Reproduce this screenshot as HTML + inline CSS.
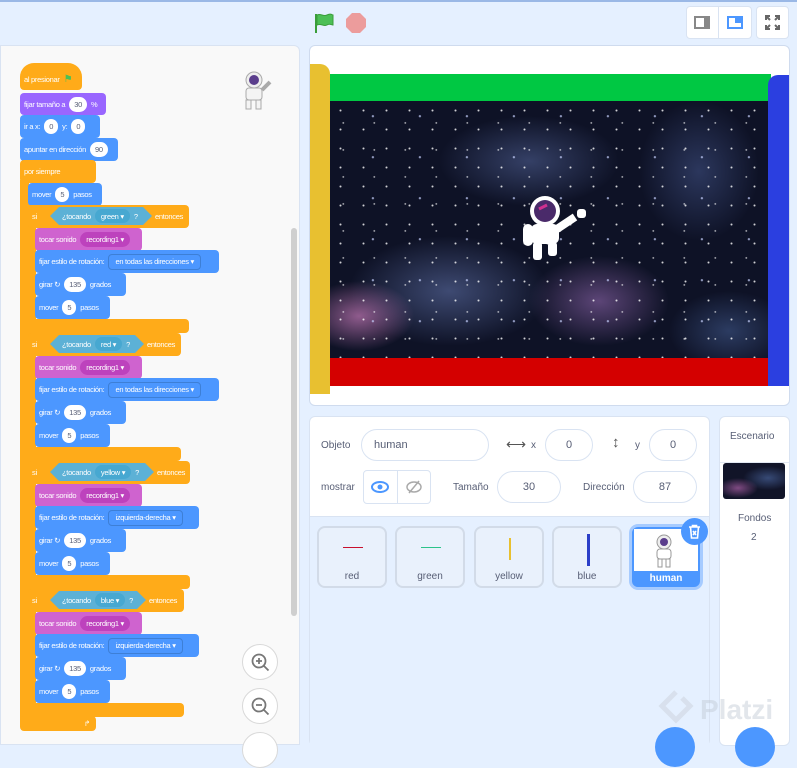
<!DOCTYPE html>
<html><head><meta charset="utf-8"><style>
*{margin:0;padding:0;box-sizing:border-box}
body{width:797px;height:740px;overflow:hidden;background:#e5f0ff;font-family:"Liberation Sans",sans-serif;position:relative}
.a{position:absolute}
.b{position:absolute;height:23px;border-radius:4px;color:#fff;font-size:7.5px;display:flex;align-items:center;padding-left:4px;gap:4px;white-space:nowrap;letter-spacing:-0.3px}
.o{background:#ffab19}.p{background:#9966ff}.bl{background:#4c97ff}.m{background:#cf63cf}
.in{background:#fff;color:#575e75;border-radius:8px;height:15px;padding:0 5px;display:flex;align-items:center}
.dm{background:#bd42bd;border-radius:8px;height:15px;padding:0 6px;display:flex;align-items:center}
.db{background:#4c97ff;border:1px solid #3d7fd6;border-radius:4px;height:16px;padding:0 6px;display:flex;align-items:center}
.hx{position:absolute;height:18px;top:2px;background:#5cb1d6;color:#fff;display:flex;align-items:center;gap:4px;padding:0 12px;clip-path:polygon(9px 0,calc(100% - 9px) 0,100% 50%,calc(100% - 9px) 100%,9px 100%,0 50%)}
.dc{background:#47a8d1;border-radius:8px;height:14px;padding:0 6px;display:flex;align-items:center}
.fld{position:absolute;height:32px;border:1px solid #d9e3f2;border-radius:16px;background:#fff;font-size:11px;color:#575e75;display:flex;align-items:center;justify-content:center}
.lb{position:absolute;font-size:10px;color:#575e75}
.sp{position:absolute;top:526px;width:70px;height:62px;border:2px solid #d2dbe8;border-radius:8px;background:#e9f1fc;font-size:10px;color:#575e75;text-align:center}
.sp span{position:absolute;bottom:4px;left:0;right:0}
.zb{position:absolute;width:36px;height:36px;border-radius:50%;border:1px solid #d9d9d9;background:#fff}
.en{position:absolute;font-size:7.5px}
</style></head><body>
<div class="a" style="left:0;top:0;width:797px;height:2px;background:#9ab8e6"></div>
<svg class="a" style="left:313px;top:12px" width="22" height="22" viewBox="0 0 22 22"><path d="M3 2v19" stroke="#3a9d3a" stroke-width="2"/><path d="M4 3c4-2 6 2 10 0s5 0 6 0v10c-2 0-3-2-6 0s-6-2-10 0z" fill="#4cbf56" stroke="#3a9d3a"/></svg>
<svg class="a" style="left:345px;top:12px" width="22" height="22"><polygon points="7,1 15,1 21,7 21,15 15,21 7,21 1,15 1,7" fill="#ec9c9c"/></svg>
<div class="a" style="left:686px;top:6px;width:66px;height:33px;background:#fff;border:1px solid #d9e3f2;border-radius:4px"></div>
<div class="a" style="left:718px;top:6px;width:1px;height:33px;background:#d9e3f2"></div>
<div class="a" style="left:694px;top:16px;width:16px;height:13px;border:2px solid #888"></div>
<div class="a" style="left:704px;top:16px;width:6px;height:13px;background:#888"></div>
<div class="a" style="left:727px;top:16px;width:16px;height:13px;border:2px solid #4c97ff"></div>
<div class="a" style="left:735px;top:16px;width:8px;height:7px;background:#4c97ff"></div>
<div class="a" style="left:756px;top:6px;width:33px;height:33px;background:#fff;border:1px solid #d9e3f2;border-radius:4px"></div>
<svg class="a" style="left:764px;top:14px" width="17" height="17" stroke="#666" stroke-width="2" fill="none"><path d="M2 6V2h4M2 2l4 4M15 6V2h-4M15 2l-4 4M2 11v4h4M2 15l4-4M15 11v4h-4M15 15l-4-4"/></svg>

<div class="a" style="left:0;top:45px;width:300px;height:700px;background:#f9f9f9;border:1px solid #d9e3f2;border-radius:0 6px 0 0"></div>
<div class="a" style="left:291px;top:228px;width:6px;height:388px;background:#cfcfcf;border-radius:3px"></div>
<svg class="a" style="left:234px;top:68px" width="42" height="44"><circle cx="20" cy="12" r="8" fill="#eee" stroke="#aaa"/><circle cx="20" cy="12" r="5" fill="#5a3d8c"/><rect x="12" y="20" width="16" height="12" rx="3" fill="#f4f4f4" stroke="#aaa"/><rect x="12" y="32" width="5" height="9" fill="#f4f4f4" stroke="#aaa"/><rect x="22" y="32" width="5" height="9" fill="#f4f4f4" stroke="#aaa"/><path d="M28 22l8-8" stroke="#aaa" stroke-width="4"/></svg>

<div class="b o" style="left:20px;top:63px;width:62px;height:27px;border-radius:14px 14px 4px 4px;padding-top:5px">al presionar <span style="color:#4cbf56;font-size:10px">⚑</span></div>
<div class="b p" style="left:20px;top:93px;width:86px;height:22px">fijar tamaño a <span class="in">30</span> %</div>
<div class="b bl" style="left:20px;top:115px;width:80px">ir a x: <span class="in">0</span> y: <span class="in">0</span></div>
<div class="b bl" style="left:20px;top:138px;width:98px">apuntar en dirección <span class="in">90</span></div>
<div class="b o" style="left:20px;top:160px;width:76px">por siempre</div>
<div class="a" style="left:20px;top:180px;width:9px;height:540px;background:#ffab19"></div>
<div class="b bl" style="left:28px;top:183px;width:74px">mover <span class="in">5</span> pasos</div>

<div class="a" style="left:28px;top:205px;width:8px;height:128px;background:#ffab19"></div>
<div class="b o" style="left:28px;top:205px;width:161px">si<div class="hx" style="left:22px;width:102px">¿tocando <span class="dc">green ▾</span> ?</div><span class="en" style="left:127px">entonces</span></div>
<div class="b m" style="left:35px;top:228px;width:107px">tocar sonido <span class="dm">recording1 ▾</span></div>
<div class="b bl" style="left:35px;top:250px;width:184px">fijar estilo de rotación: <span class="db">en todas las direcciones ▾</span></div>
<div class="b bl" style="left:35px;top:273px;width:91px">girar ↻ <span class="in">135</span> grados</div>
<div class="b bl" style="left:35px;top:296px;width:75px">mover <span class="in">5</span> pasos</div>
<div class="a" style="left:28px;top:319px;width:161px;height:14px;background:#ffab19;border-radius:0 4px 4px 0"></div>

<div class="a" style="left:28px;top:333px;width:8px;height:128px;background:#ffab19"></div>
<div class="b o" style="left:28px;top:333px;width:153px">si<div class="hx" style="left:22px;width:94px">¿tocando <span class="dc">red ▾</span> ?</div><span class="en" style="left:119px">entonces</span></div>
<div class="b m" style="left:35px;top:356px;width:107px">tocar sonido <span class="dm">recording1 ▾</span></div>
<div class="b bl" style="left:35px;top:378px;width:184px">fijar estilo de rotación: <span class="db">en todas las direcciones ▾</span></div>
<div class="b bl" style="left:35px;top:401px;width:91px">girar ↻ <span class="in">135</span> grados</div>
<div class="b bl" style="left:35px;top:424px;width:75px">mover <span class="in">5</span> pasos</div>
<div class="a" style="left:28px;top:447px;width:153px;height:14px;background:#ffab19;border-radius:0 4px 4px 0"></div>

<div class="a" style="left:28px;top:461px;width:8px;height:128px;background:#ffab19"></div>
<div class="b o" style="left:28px;top:461px;width:162px">si<div class="hx" style="left:22px;width:104px">¿tocando <span class="dc">yellow ▾</span> ?</div><span class="en" style="left:129px">entonces</span></div>
<div class="b m" style="left:35px;top:484px;width:107px">tocar sonido <span class="dm">recording1 ▾</span></div>
<div class="b bl" style="left:35px;top:506px;width:164px">fijar estilo de rotación: <span class="db">izquierda-derecha ▾</span></div>
<div class="b bl" style="left:35px;top:529px;width:91px">girar ↻ <span class="in">135</span> grados</div>
<div class="b bl" style="left:35px;top:552px;width:75px">mover <span class="in">5</span> pasos</div>
<div class="a" style="left:28px;top:575px;width:162px;height:14px;background:#ffab19;border-radius:0 4px 4px 0"></div>

<div class="a" style="left:28px;top:589px;width:8px;height:128px;background:#ffab19"></div>
<div class="b o" style="left:28px;top:589px;width:156px">si<div class="hx" style="left:22px;width:96px">¿tocando <span class="dc">blue ▾</span> ?</div><span class="en" style="left:121px">entonces</span></div>
<div class="b m" style="left:35px;top:612px;width:107px">tocar sonido <span class="dm">recording1 ▾</span></div>
<div class="b bl" style="left:35px;top:634px;width:164px">fijar estilo de rotación: <span class="db">izquierda-derecha ▾</span></div>
<div class="b bl" style="left:35px;top:657px;width:91px">girar ↻ <span class="in">135</span> grados</div>
<div class="b bl" style="left:35px;top:680px;width:75px">mover <span class="in">5</span> pasos</div>
<div class="a" style="left:28px;top:703px;width:156px;height:14px;background:#ffab19;border-radius:0 4px 4px 0"></div>
<div class="b o" style="left:20px;top:716px;width:76px;height:15px;justify-content:flex-end;padding-right:6px">↱</div>

<div class="zb" style="left:242px;top:644px"></div>
<svg class="a" style="left:250px;top:652px" width="20" height="20" fill="none" stroke="#777" stroke-width="1.8"><circle cx="9" cy="9" r="6.5"/><path d="M13.5 13.5l5 5M9 6v6M6 9h6"/></svg>
<div class="zb" style="left:242px;top:688px"></div>
<svg class="a" style="left:250px;top:696px" width="20" height="20" fill="none" stroke="#777" stroke-width="1.8"><circle cx="9" cy="9" r="6.5"/><path d="M13.5 13.5l5 5M6 9h6"/></svg>
<div class="zb" style="left:242px;top:732px"></div>

<div class="a" style="left:309px;top:45px;width:481px;height:361px;background:#fff;border:1px solid #cfdbee;border-radius:6px;overflow:hidden">
 <div class="a" style="left:19px;top:28px;width:442px;height:28px;background:#00c843"></div>
 <div class="a" style="left:19px;top:55px;width:440px;height:258px;background:
  radial-gradient(circle at 50% 50%,rgba(255,255,255,.8) 0.7px,transparent 1.3px) 0 0/23px 19px,
  radial-gradient(circle at 30% 70%,rgba(255,255,255,.6) 0.6px,transparent 1.2px) 5px 3px/31px 27px,
  radial-gradient(circle at 70% 20%,rgba(200,210,255,.7) 0.8px,transparent 1.5px) 11px 7px/47px 41px,
  radial-gradient(ellipse 55px 35px at 30px 215px,rgba(230,140,210,.6),transparent),
  radial-gradient(ellipse 100px 55px at 120px 190px,rgba(110,130,190,.5),transparent),
  radial-gradient(ellipse 70px 45px at 270px 200px,rgba(170,120,200,.5),transparent),
  radial-gradient(ellipse 90px 45px at 200px 60px,rgba(100,120,180,.45),transparent),
  radial-gradient(ellipse 60px 70px at 370px 70px,rgba(80,100,160,.45),transparent),
  radial-gradient(ellipse 60px 40px at 400px 230px,rgba(80,110,170,.45),transparent),
  #0e1226"></div>
 <div class="a" style="left:19px;top:312px;width:442px;height:28px;background:#d40000"></div>
 <div class="a" style="left:0;top:18px;width:20px;height:330px;background:#e8c030;border-radius:0 10px 0 0"></div>
 <div class="a" style="left:458px;top:29px;width:23px;height:311px;background:#2b3fe0;border-radius:10px 0 0 0"></div>
 <svg class="a" style="left:205px;top:143px" width="80" height="75"><circle cx="30" cy="22" r="15" fill="#fff"/><circle cx="30" cy="22" r="11" fill="#4a2a6a"/><path d="M24 20l8-4" stroke="#d03090" stroke-width="3"/><rect x="16" y="35" width="28" height="20" rx="6" fill="#fff"/><rect x="8" y="35" width="10" height="22" rx="5" fill="#fff"/><path d="M42 40l18-12" stroke="#fff" stroke-width="8"/><rect x="62" y="20" width="9" height="9" rx="3" fill="#fff"/><rect x="18" y="53" width="9" height="18" rx="3" fill="#fff"/><rect x="33" y="53" width="9" height="14" rx="3" fill="#fff"/></svg>
</div>

<div class="a" style="left:309px;top:416px;width:401px;height:330px;background:#fff;border:1px solid #d9e3f2;border-radius:6px"></div>
<div class="a" style="left:310px;top:516px;width:399px;height:230px;background:#e5f0ff;border-top:1px solid #d9e3f2"></div>
<div class="lb" style="left:321px;top:440px">Objeto</div>
<div class="fld" style="left:361px;top:429px;width:128px;justify-content:flex-start;padding-left:12px">human</div>
<div class="lb" style="left:506px;top:436px;font-size:14px;color:#555">⟷</div>
<div class="lb" style="left:531px;top:440px">x</div>
<div class="fld" style="left:545px;top:429px;width:48px">0</div>
<div class="lb" style="left:612px;top:434px;font-size:15px;color:#555">↕</div>
<div class="lb" style="left:635px;top:440px">y</div>
<div class="fld" style="left:649px;top:429px;width:48px">0</div>
<div class="lb" style="left:321px;top:482px">mostrar</div>
<div class="a" style="left:363px;top:470px;width:68px;height:34px;border:1px solid #d9e3f2;border-radius:4px;background:#fff"></div>
<div class="a" style="left:397px;top:470px;width:1px;height:34px;background:#d9e3f2"></div>
<svg class="a" style="left:371px;top:480px" width="18" height="14"><ellipse cx="9" cy="7" rx="8" ry="5" fill="none" stroke="#4c97ff" stroke-width="2"/><circle cx="9" cy="7" r="2.5" fill="#4c97ff"/></svg>
<svg class="a" style="left:405px;top:480px" width="18" height="14"><ellipse cx="9" cy="7" rx="7" ry="5" fill="none" stroke="#aaa" stroke-width="1.5"/><path d="M4 13L14 1" stroke="#aaa" stroke-width="1.5"/></svg>
<div class="lb" style="left:453px;top:482px">Tamaño</div>
<div class="fld" style="left:497px;top:471px;width:64px">30</div>
<div class="lb" style="left:583px;top:482px">Dirección</div>
<div class="fld" style="left:633px;top:471px;width:64px">87</div>

<div class="sp" style="left:317px"><div class="a" style="left:24px;top:19px;width:20px;height:1px;background:#c8102e"></div><span>red</span></div>
<div class="sp" style="left:395px"><div class="a" style="left:24px;top:19px;width:20px;height:1px;background:#2cc38a"></div><span>green</span></div>
<div class="sp" style="left:474px"><div class="a" style="left:33px;top:10px;width:2px;height:22px;background:#e8c030"></div><span>yellow</span></div>
<div class="sp" style="left:552px"><div class="a" style="left:33px;top:6px;width:3px;height:32px;background:#2b3fc8"></div><span>blue</span></div>
<div class="a" style="left:629px;top:524px;width:74px;height:66px;border:3px solid #a6cbff;border-radius:9px;background:#4c97ff;overflow:hidden">
 <div class="a" style="left:2px;top:2px;width:64px;height:42px;background:#fff"></div>
 <svg class="a" style="left:18px;top:6px" width="30" height="36"><circle cx="14" cy="9" r="7" fill="#eee" stroke="#999"/><circle cx="14" cy="9" r="4" fill="#5a3d8c"/><rect x="7" y="16" width="14" height="10" rx="3" fill="#fff" stroke="#999"/><rect x="8" y="26" width="4" height="8" fill="#fff" stroke="#999"/><rect x="16" y="26" width="4" height="8" fill="#fff" stroke="#999"/></svg>
 <div class="a" style="left:0;top:46px;width:68px;text-align:center;color:#fff;font-size:10px;font-weight:bold">human</div>
</div>
<div class="a" style="left:681px;top:518px;width:27px;height:27px;border-radius:50%;background:#4c97ff"></div>
<svg class="a" style="left:688px;top:524px" width="13" height="15" fill="none" stroke="#fff" stroke-width="1.6"><path d="M1 3h11M4.5 3V1.5h4V3M2.5 3l1 11h6l1-11M5 7l3 4M8 7l-3 4"/></svg>

<div class="a" style="left:719px;top:416px;width:71px;height:330px;background:#fff;border:1px solid #d9e3f2;border-radius:6px"></div>
<div class="a" style="left:720px;top:462px;width:69px;height:1px;background:#e2e8f2"></div>
<div class="lb" style="left:730px;top:431px">Escenario</div>
<div class="a" style="left:723px;top:463px;width:62px;height:36px;border-radius:3px;background:radial-gradient(ellipse 20px 10px at 15px 25px,rgba(200,110,190,.6),transparent),radial-gradient(ellipse 25px 12px at 45px 15px,rgba(80,110,170,.6),transparent),#111428"></div>
<div class="lb" style="left:738px;top:513px">Fondos</div>
<div class="lb" style="left:751px;top:532px">2</div>

<div class="a" style="left:655px;top:727px;width:40px;height:40px;border-radius:50%;background:#4c97ff"></div>
<div class="a" style="left:735px;top:727px;width:40px;height:40px;border-radius:50%;background:#4c97ff"></div>
<svg class="a" style="left:658px;top:688px" width="36" height="42" fill="none" stroke="rgba(200,205,215,.45)" stroke-width="5"><path d="M18 4L4 18l14 14 14-14-8-8"/></svg>
<div class="a" style="left:700px;top:694px;font-size:28px;color:rgba(190,200,210,.45);font-weight:bold">Platzi</div>
</body></html>
